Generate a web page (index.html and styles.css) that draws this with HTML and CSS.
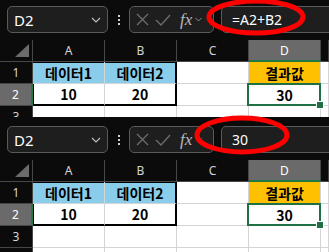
FILE: index.html
```html
<!DOCTYPE html>
<html lang="ko">
<head>
    <meta charset="UTF-8">
    <title>Excel 수식</title>
    <link rel="stylesheet" href="styles.css">
</head>
<body>
    <div class="shot first">
        <div class="bar">
            <div class="namebox">
                <span>D2</span>
                <svg class="chev" width="10" height="6" viewBox="0 0 10 6"><path d="M1 1 L5 5 L9 1" fill="none" stroke="#bdbdbd" stroke-width="1.2"/></svg>
            </div>
            <div class="dots"><i></i><i></i><i></i></div>
            <div class="fxbox">
                <svg width="13" height="13" viewBox="0 0 13 13"><path d="M1 1 L12 12 M12 1 L1 12" stroke="#6e6e6e" stroke-width="1.3"/></svg>
                <svg width="16" height="12" viewBox="0 0 16 12"><path d="M1 6 L6 11 L15 1" fill="none" stroke="#6e6e6e" stroke-width="1.3"/></svg>
                <span class="fx">fx</span>
                <svg width="7" height="5" viewBox="0 0 7 5"><path d="M0.5 1 L3.5 4 L6.5 1" fill="none" stroke="#8a8a8a" stroke-width="1"/></svg>
            </div>
            <div class="formula">=A2+B2</div>
        </div>
        <div class="grid">
            <div class="corner"><span></span></div>
            <div class="colhead">A</div>
            <div class="colhead">B</div>
            <div class="colhead">C</div>
            <div class="colhead sel">D</div>
            <div class="colhead"></div>

            <div class="rowhead">1</div>
            <div class="cell blue box-top box-left">데이터1</div>
            <div class="cell blue box-top box-right">데이터2</div>
            <div class="cell"></div>
            <div class="cell gold">결과값</div>
            <div class="cell"></div>

            <div class="rowhead sel">2</div>
            <div class="cell box-left box-bottom">10</div>
            <div class="cell box-right box-bottom">20</div>
            <div class="cell"></div>
            <div class="cell active">30</div>
            <div class="cell"></div>

            <div class="rowhead">3</div>
            <div class="cell"></div>
            <div class="cell"></div>
            <div class="cell"></div>
            <div class="cell"></div>
            <div class="cell"></div>
        </div>
        <svg class="ring" width="110" height="44" viewBox="0 0 110 44"><ellipse cx="55" cy="22" rx="47" ry="16" fill="none" stroke="#ff0000" stroke-width="5"/></svg>
    </div>

    <div class="shot second">
        <div class="bar">
            <div class="namebox">
                <span>D2</span>
                <svg class="chev" width="10" height="6" viewBox="0 0 10 6"><path d="M1 1 L5 5 L9 1" fill="none" stroke="#bdbdbd" stroke-width="1.2"/></svg>
            </div>
            <div class="dots"><i></i><i></i><i></i></div>
            <div class="fxbox">
                <svg width="13" height="13" viewBox="0 0 13 13"><path d="M1 1 L12 12 M12 1 L1 12" stroke="#6e6e6e" stroke-width="1.3"/></svg>
                <svg width="16" height="12" viewBox="0 0 16 12"><path d="M1 6 L6 11 L15 1" fill="none" stroke="#6e6e6e" stroke-width="1.3"/></svg>
                <span class="fx">fx</span>
                <svg width="7" height="5" viewBox="0 0 7 5"><path d="M0.5 1 L3.5 4 L6.5 1" fill="none" stroke="#8a8a8a" stroke-width="1"/></svg>
            </div>
            <div class="formula">30</div>
        </div>
        <div class="grid">
            <div class="corner"><span></span></div>
            <div class="colhead">A</div>
            <div class="colhead">B</div>
            <div class="colhead">C</div>
            <div class="colhead sel">D</div>
            <div class="colhead"></div>

            <div class="rowhead">1</div>
            <div class="cell blue box-top box-left">데이터1</div>
            <div class="cell blue box-top box-right">데이터2</div>
            <div class="cell"></div>
            <div class="cell gold">결과값</div>
            <div class="cell"></div>

            <div class="rowhead sel">2</div>
            <div class="cell box-left box-bottom">10</div>
            <div class="cell box-right box-bottom">20</div>
            <div class="cell"></div>
            <div class="cell active">30</div>
            <div class="cell"></div>

            <div class="rowhead">3</div>
            <div class="cell"></div>
            <div class="cell"></div>
            <div class="cell"></div>
            <div class="cell"></div>
            <div class="cell"></div>

            <div class="rowhead"></div>
            <div class="cell"></div>
            <div class="cell"></div>
            <div class="cell"></div>
            <div class="cell"></div>
            <div class="cell"></div>
        </div>
        <svg class="ring" width="110" height="46" viewBox="0 0 110 46"><ellipse cx="55" cy="23" rx="45" ry="17" fill="none" stroke="#ff0000" stroke-width="5"/></svg>
    </div>
</body>
</html>
```

FILE: styles.css
```css
body, html {
    padding: 0;
    margin: 0;
    overflow: hidden;
}

body {
    background-color: #0b0b0b;
    width: 329px;
    height: 252px;
}

.shot {
    position: relative;
    background-color: #0b0b0b;
}

.shot.first {
    height: 117px;
    overflow: hidden;
    margin-bottom: 3px;
}

.shot.second {
    height: 132px;
}

/* formula bar */
.bar {
    display: flex;
    align-items: center;
    height: 40px;
    padding-left: 7px;
    padding-bottom: 1px;
    box-sizing: border-box;
}

.namebox, .fxbox, .formula {
    height: 27px;
    box-sizing: border-box;
    border: 1px solid #5a5a5a;
    border-radius: 5px;
    background-color: #1e1e1e;
    display: flex;
    align-items: center;
}

.namebox {
    width: 101px;
    padding-left: 6px;
    padding-right: 6px;
    justify-content: space-between;
    font-family: "Noto Sans", sans-serif;
    font-size: 15px;
    color: #ffffff;
}

.dots {
    width: 21px;
    display: flex;
    flex-direction: column;
    align-items: center;
    gap: 2px;
}

.dots i {
    width: 2px;
    height: 2px;
    background-color: #d0d0d0;
}

.fxbox {
    width: 85px;
    padding-left: 6px;
    gap: 6px;
}

.fxbox .fx {
    font-family: "Liberation Serif", serif;
    font-style: italic;
    font-size: 17px;
    color: #b8b8b8;
    margin-left: 3px;
    margin-right: -3px;
}

.formula {
    margin-left: 7px;
    flex: 1;
    margin-right: -10px;
    padding-left: 10px;
    font-family: "Noto Sans", sans-serif;
    font-size: 14px;
    color: #ffffff;
}

/* grid */
.grid {
    display: grid;
    grid-template-columns: 33px 72px 72px 72px 72px 1fr;
    grid-auto-rows: 22px;
    font-family: "Noto Sans CJK KR", sans-serif;
}

.second .grid {
    height: 92px;
    overflow: hidden;
}

.corner {
    border-right: 1px solid #474747;
    border-bottom: 1px solid #474747;
    display: flex;
    align-items: flex-end;
    justify-content: flex-end;
    padding: 0 3px 4px 0;
}

.corner span {
    width: 0;
    height: 0;
    border-left: 14px solid transparent;
    border-bottom: 13px solid #6b6b6b;
}

.colhead, .rowhead {
    background-color: #0b0b0b;
    color: #d6d6d6;
    font-family: "Noto Sans", sans-serif;
    font-size: 12px;
    display: flex;
    align-items: center;
    justify-content: center;
    border-right: 1px solid #474747;
    border-bottom: 1px solid #474747;
}

.colhead.sel {
    background-color: #6a6a6a;
    color: #ffffff;
    border-bottom: 2px solid #1f7a45;
}

.rowhead.sel {
    background-color: #6a6a6a;
    color: #ffffff;
    border-right: 2px solid #1f7a45;
}

.cell {
    background-color: #ffffff;
    border-right: 1px solid #d4d4d4;
    border-bottom: 1px solid #d4d4d4;
    font-weight: 700;
    font-size: 14px;
    color: #000000;
    display: flex;
    align-items: center;
    justify-content: center;
    position: relative;
}

.cell.blue {
    background-color: #89cdea;
}

.cell.gold {
    background-color: #ffc000;
}

.cell.box-top {
    box-shadow: inset 0 1px 0 #000000;
}

.cell.box-left.box-bottom {
    box-shadow: inset 1px 0 0 #000000;
}

.cell.box-bottom {
    border-bottom-color: #000000;
    border-bottom-width: 2px;
}

.cell.box-right {
    border-right-color: #000000;
    border-right-width: 2px;
}

.cell.active::after {
    content: "";
    position: absolute;
    left: -2px;
    top: -1px;
    right: -1px;
    bottom: -1px;
    border: 2px solid #1f7045;
}

.cell.active::before {
    content: "";
    position: absolute;
    right: -4px;
    bottom: -4px;
    width: 6px;
    height: 6px;
    background-color: #1f7045;
    border: 1px solid #ffffff;
    z-index: 2;
}

.ring {
    position: absolute;
}

.first .ring {
    left: 201px;
    top: -5px;
}

.second .ring {
    left: 187px;
    top: -8px;
}
```
